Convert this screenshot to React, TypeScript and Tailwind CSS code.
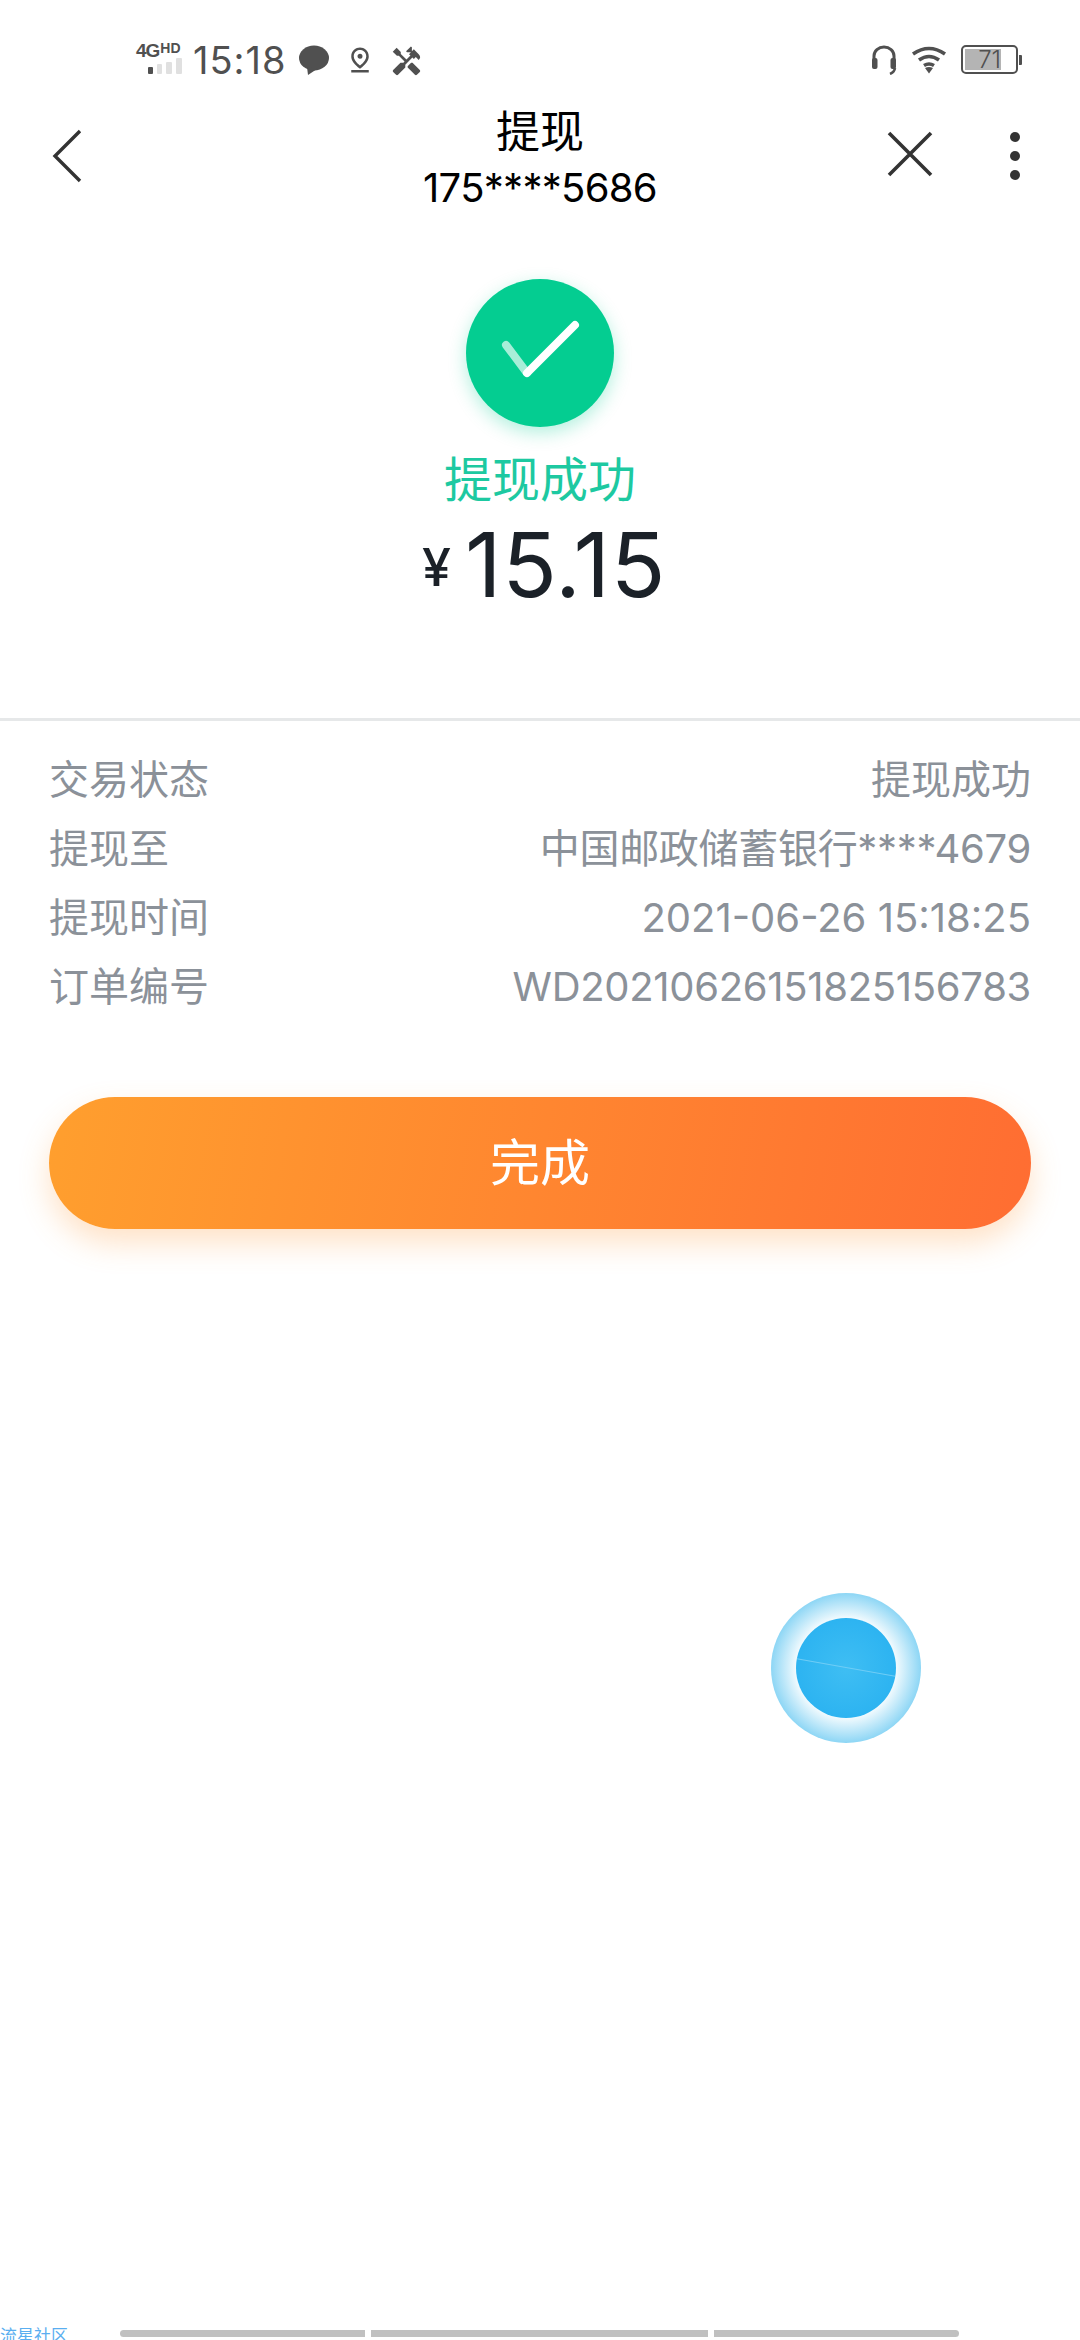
import { MdHandyman, MdOutlinePinDrop } from 'react-icons/md';

const rows = [
  { label: '交易状态', value: '提现成功', valueClass: '' },
  { label: '提现至', value: '中国邮政储蓄银行****4679', valueClass: 'tracking-[-0.3px]' },
  { label: '提现时间', value: '2021-06-26 15:18:25', valueClass: '' },
  { label: '订单编号', value: 'WD20210626151825156783', valueClass: 'tracking-[-0.3px]' },
];

const StatusBar = () => {
  return (
    <div className="h-[90px] pt-[43px] pl-[136px] pr-[58px] flex items-start text-[#505050]">
      <div className="w-[48px] h-[31px] flex flex-col">
        <div className="flex items-start h-[15px] font-['Liberation_Sans',sans-serif] font-bold">
          <span className="text-[19px] leading-[15px] tracking-[-1px]">4G</span>
          <span className="text-[14px] leading-[10px] ml-[1px]">HD</span>
        </div>
        <div className="flex items-end gap-[4px] h-[16px] ml-[12px]">
          <div className="w-[5px] h-[7px] rounded-[1px] bg-[#505050]"></div>
          <div className="w-[5px] h-[10px] rounded-[1px] bg-[#e0e0e0]"></div>
          <div className="w-[6px] h-[12px] rounded-[1px] bg-[#e0e0e0]"></div>
          <div className="w-[6px] h-[16px] rounded-[1px] bg-[#e0e0e0]"></div>
        </div>
      </div>
      <span className="ml-[9px] text-[38px] leading-[34px] tracking-[1px] font-['Inter',sans-serif]">15:18</span>
      <svg className="ml-[13px] mt-[2px]" width="30" height="30" viewBox="0 0 30 30" fill="#505050">
        <ellipse cx="15" cy="13" rx="15" ry="12.5" />
        <path d="M8 22 L9 30 L18 24 Z" />
      </svg>
      <MdOutlinePinDrop className="ml-[16px] mt-[2px]" size={30} />
      <MdHandyman className="ml-[15px] mt-[2px]" size={33} />
      <div className="flex-1"></div>
      <svg className="mt-[2px]" width="26" height="30" viewBox="0 0 26 30" fill="none" stroke="#505050">
        <path d="M3 16 V11 A10 9 0 0 1 23 11 V16" strokeWidth="3" />
        <rect x="1" y="13" width="5.5" height="11" rx="2" fill="#505050" strokeWidth="0" />
        <rect x="19.5" y="13" width="5.5" height="11" rx="2" fill="#505050" strokeWidth="0" />
        <path d="M24 23 Q23.5 27 19 29" strokeWidth="2.5" />
      </svg>
      <svg className="ml-[14px] mt-[3px]" width="36" height="28" viewBox="0 0 36 28" fill="none" stroke="#505050" strokeWidth="3.6">
        <path d="M2 8 Q18 -3 34 8" />
        <path d="M8 14 Q18 7 28 14" />
        <path d="M13 19.5 Q18 16.5 23 19.5" />
        <path d="M14 22 L18 27.5 L22 22 Q18 20 14 22 Z" fill="#505050" strokeWidth="0" />
      </svg>
      <div className="ml-[14px] mt-[2px] flex items-center">
        <div className="w-[57px] h-[29px] rounded-[5px] border-[2.5px] border-[#505050] p-[2px]">
          <div className="w-[36px] h-full bg-[#b4b4b4] flex items-center justify-end">
            <span className="text-[24px] leading-none font-['Inter',sans-serif] font-light">71</span>
          </div>
        </div>
        <div className="w-[3px] h-[10px] ml-[1px] bg-[#505050] rounded-r-[1px]"></div>
      </div>
    </div>
  );
};

const NavBar = () => {
  return (
    <div className="grid grid-cols-[1fr_auto_1fr] h-[125px] text-black">
      <div className="pl-[50px] pt-[38px]">
        <svg width="34" height="56" viewBox="0 0 34 56" fill="none" stroke="#333" strokeWidth="3.4">
          <path d="M30 3 L5 28 L30 53" />
        </svg>
      </div>
      <div className="flex flex-col items-center pt-[20px]">
        <span className="text-[44px] leading-[44px]">提现</span>
        <span className="text-[40px] leading-[44px] mt-[12px] tracking-[-0.7px]">175****5686</span>
      </div>
      <div className="flex justify-end pr-[60px] pt-[41px]">
        <svg width="46" height="46" viewBox="0 0 46 46" fill="none" stroke="#333" strokeWidth="3.6">
          <path d="M2 2 L44 44 M44 2 L2 44" />
        </svg>
        <div className="ml-[77px] mt-[1px] flex flex-col gap-[9px]">
          <div className="w-[10px] h-[10px] rounded-full bg-[#333]"></div>
          <div className="w-[10px] h-[10px] rounded-full bg-[#333]"></div>
          <div className="w-[10px] h-[10px] rounded-full bg-[#333]"></div>
        </div>
      </div>
    </div>
  );
};

const Hero = () => {
  return (
    <div className="flex flex-col items-center pt-[64px] h-[506px] border-b-[3px] border-[#e6e8e9]">
      <div className="w-[148px] h-[148px] rounded-full bg-[#04cd91] shadow-[0_6px_18px_rgba(4,205,145,0.3)] flex items-center justify-center">
        <svg width="148" height="148" viewBox="0 0 148 148" fill="none" strokeWidth="8" strokeLinecap="round">
          <path d="M40 66 L61 94" stroke="#ffffff" strokeOpacity="0.65" />
          <path d="M61 94 L109 46" stroke="#ffffff" />
        </svg>
      </div>
      <div className="mt-[23px] text-[48px] leading-[60px] text-[#1dc9a1]">提现成功</div>
      <div className="mt-[5px] ml-[8px] flex items-center text-[#1b2128] h-[100px]">
        <span className="text-[52px] leading-none mr-[14px] mt-[6px] font-medium">¥</span>
        <span className="text-[90px] leading-none tracking-[0.5px]">15.15</span>
      </div>
    </div>
  );
};

const App = () => {
  return (
    <div className="relative w-[1080px] h-[2340px] overflow-hidden bg-white flex flex-col font-['Inter','Noto_Sans_CJK_SC',sans-serif]">
      <StatusBar />
      <NavBar />
      <Hero />

      <div className="pt-[24px] px-[49px] flex flex-col text-[#8b9199] text-[40px]">
        {rows.map((row) => (
          <div key={row.label} className="h-[69px] flex items-center justify-between">
            <span>{row.label}</span>
            <span className={row.valueClass}>{row.value}</span>
          </div>
        ))}
      </div>

      <div className="mt-[76px] mx-[49px] h-[132px] rounded-full bg-[linear-gradient(100deg,#ff9f2e,#ff6d32)] shadow-[0_14px_30px_rgba(255,160,70,0.3)] flex items-center justify-center text-white text-[50px]">
        完成
      </div>

      {/* floating ball */}
      <div className="absolute left-[771px] top-[1593px] w-[150px] h-[150px] rounded-full bg-[radial-gradient(circle_closest-side,#ffffff_62%,#8dd6f5_100%)] flex items-center justify-center">
        <div className="relative w-[100px] h-[100px] rounded-full overflow-hidden bg-[radial-gradient(circle,#3fbef3,#25aff0)]">
          <div className="absolute left-0 top-[49px] w-[100px] h-[1px] rotate-[10deg] bg-[#6fcdf6]"></div>
        </div>
      </div>

      <div className="mt-auto h-[14px] flex items-start">
        <span className="w-[120px] text-[17px] leading-[20px] text-[#5aaef0] overflow-hidden whitespace-nowrap">流星社区</span>
        <div className="mt-[4px] flex gap-[6px]">
          <div className="w-[245px] h-[7px] rounded-l-full bg-[#c0c0c0]"></div>
          <div className="w-[337px] h-[7px] bg-[#c0c0c0]"></div>
          <div className="w-[245px] h-[7px] rounded-r-full bg-[#c0c0c0]"></div>
        </div>
      </div>
    </div>
  );
};

export default App;
